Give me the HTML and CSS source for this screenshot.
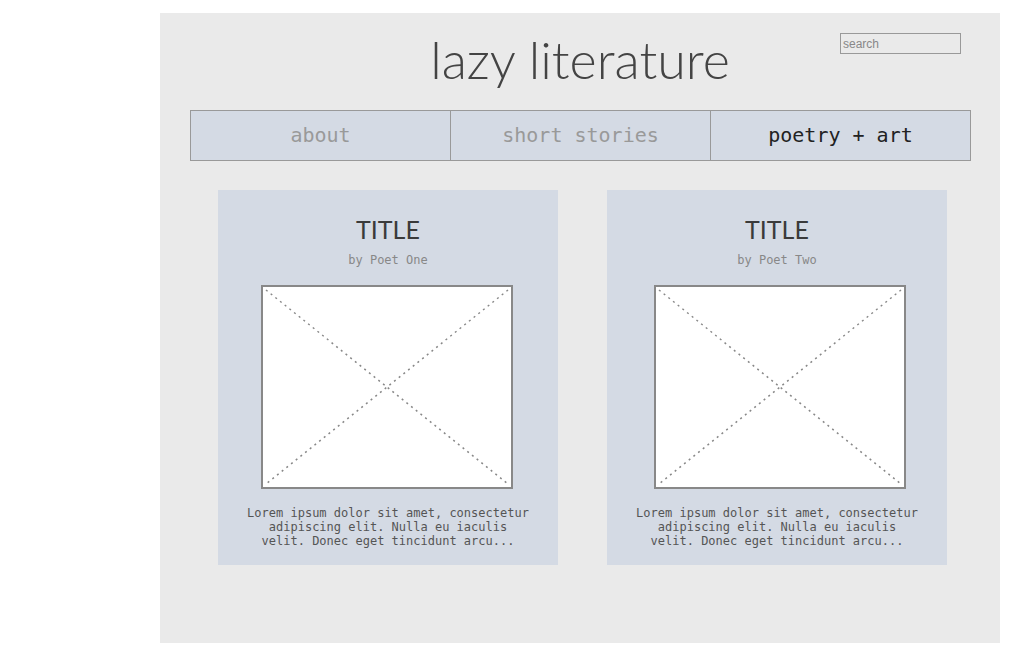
FILE: index.html
```html
<!DOCTYPE html>
<html lang="en">
<head>
  <meta charset="UTF-8">
  <meta name="viewport" content="width=device-width, initial-scale=1.0">
  <title>lazy literature</title>
  <link rel="stylesheet" href="styles.css">
</head>
<body>
  <div class="container">
    <!-- Header with site title and search -->
    <div class="header">
      <h1>lazy literature</h1>
      <input type="text" class="search" placeholder="search" />
    </div>

    <!-- Navigation -->
    <div class="nav">
      <a class="nav-item">about</a>
      <a class="nav-item">short stories</a>
      <a class="nav-item active">poetry + art</a>
    </div>

    <!-- Poem cards -->
    <div class="cards">
      <div class="card">
        <h2>TITLE</h2>
        <p class="author">by Poet One</p>
        <div class="picture">
          <svg width="248" height="200" viewBox="0 0 248 200">
            <line x1="3" y1="3" x2="245" y2="197" />
            <line x1="245" y1="3" x2="3" y2="197" />
          </svg>
        </div>
        <p class="excerpt">Lorem ipsum dolor sit amet, consectetur adipiscing elit. Nulla eu iaculis velit. Donec eget tincidunt arcu...</p>
      </div>
      <div class="card">
        <h2>TITLE</h2>
        <p class="author">by Poet Two</p>
        <div class="picture">
          <svg width="248" height="200" viewBox="0 0 248 200">
            <line x1="3" y1="3" x2="245" y2="197" />
            <line x1="245" y1="3" x2="3" y2="197" />
          </svg>
        </div>
        <p class="excerpt">Lorem ipsum dolor sit amet, consectetur adipiscing elit. Nulla eu iaculis velit. Donec eget tincidunt arcu...</p>
      </div>
    </div>
  </div>
</body>
</html>
```

FILE: styles.css
```css
body {
  margin: 0;
  background-color: #fff;
  font-family: "DejaVu Sans Mono", monospace;
}

.container {
  margin: 13px 0 0 160px;
  width: 840px;
  min-height: 630px;
  background-color: #eaeaea;
  box-sizing: border-box;
  padding-top: 1px;
}

.header {
  position: relative;
  height: 96px;
  box-sizing: border-box;
  padding-top: 15px;
}

.header h1 {
  margin: 0;
  text-align: center;
  font-family: Lato, sans-serif;
  font-weight: 300;
  font-size: 52px;
  line-height: 60px;
  color: #444;
}

.search {
  position: absolute;
  top: 19px;
  left: 680px;
  width: 121px;
  height: 21px;
  box-sizing: border-box;
  border: 1px solid #999;
  background-color: #eaeaea;
  padding: 0 2px;
  font-family: "Liberation Sans", Arial, sans-serif;
  font-size: 12px;
}

.search::placeholder {
  color: #888;
}

.nav {
  display: flex;
  width: 781px;
  box-sizing: border-box;
  margin: 0 30px;
  border: 1px solid #999;
  background-color: #d4dae4;
}

.nav-item {
  flex: 1;
  height: 49px;
  line-height: 49px;
  text-align: center;
  font-size: 20px;
  color: #999;
  border-left: 1px solid #999;
}

.nav-item:first-child {
  border-left: none;
}

.nav-item.active {
  color: #222;
}

.cards {
  display: flex;
  gap: 49px;
  padding: 29px 0 0 58px;
}

.card {
  width: 340px;
  height: 375px;
  box-sizing: border-box;
  background-color: #d4dae4;
  padding-top: 24px;
  text-align: center;
}

.card h2 {
  margin: 0;
  font-family: Lato, sans-serif;
  font-weight: 400;
  font-size: 25px;
  line-height: 30px;
  color: #3a3a3a;
}

.author {
  margin: 8px 0 0;
  font-size: 12px;
  line-height: 16px;
  color: #888;
}

.picture {
  width: 252px;
  height: 204px;
  margin: 17px 0 0 43px;
  box-sizing: border-box;
  border: 2px solid #888;
  background-color: #fff;
}

.card + .card .picture {
  margin-left: 47px;
}

.picture svg {
  display: block;
}

.picture line {
  stroke: #888;
  stroke-width: 1.5;
  stroke-dasharray: 2 4;
}

.excerpt {
  margin: 17px auto 0;
  width: 284px;
  font-size: 12px;
  line-height: 14px;
  color: #555;
}
```
